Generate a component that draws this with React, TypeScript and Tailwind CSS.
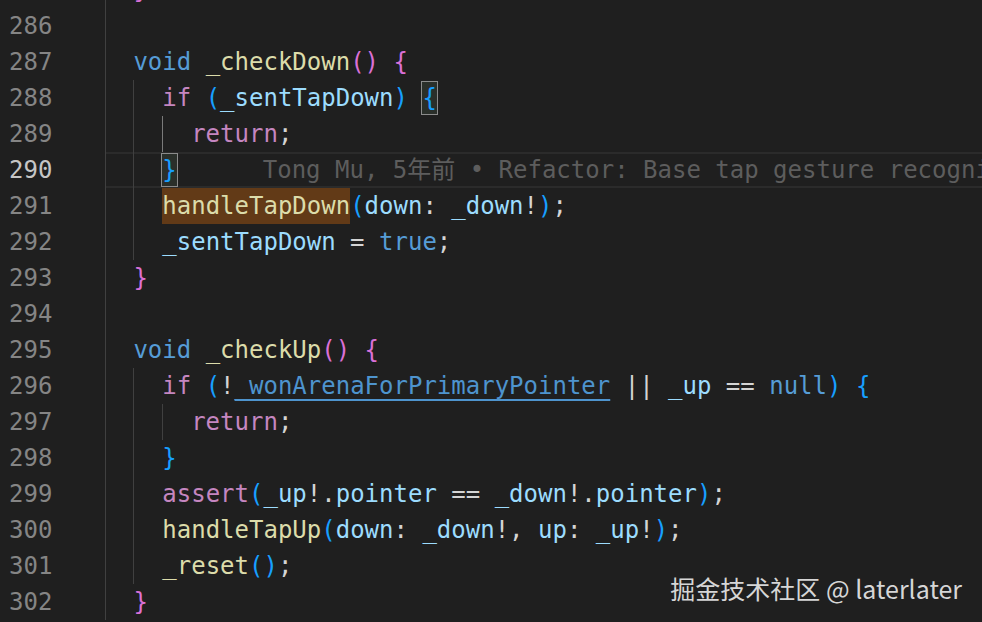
type Tok = [string, string];

const kw = "text-[#569cd6]";
const fn = "text-[#dcdcaa]";
const ctl = "text-[#c586c0]";
const vr = "text-[#9cdcfe]";
const br2 = "text-[#da70d6]";
const br3 = "text-[#179fff]";
const op = "text-[#d4d4d4]";

type Line = {
  n: number;
  guides: number; // indent guides to draw
  activeGuide?: boolean;
  toks: Tok[];
  current?: boolean;
};

const lines: Line[] = [
  { n: 285, guides: 1, toks: [["}", br2]] },
  { n: 286, guides: 1, toks: [] },
  { n: 287, guides: 1, toks: [["void", kw], [" ", op], ["_checkDown", fn], ["()", br2], [" ", op], ["{", br2]] },
  { n: 288, guides: 2, toks: [["if", ctl], [" ", op], ["(", br3], ["_sentTapDown", vr], [")", br3], [" ", op], ["{", "box " + br3]] },
  { n: 289, guides: 3, activeGuide: true, toks: [["return", ctl], [";", op]] },
  { n: 290, guides: 2, current: true, toks: [["}", "box " + br3]] },
  { n: 291, guides: 2, toks: [["handleTapDown", "hl " + fn], ["(", br3], ["down", vr], [": ", op], ["_down", vr], ["!", op], [")", br3], [";", op]] },
  { n: 292, guides: 2, toks: [["_sentTapDown", vr], [" = ", op], ["true", kw], [";", op]] },
  { n: 293, guides: 1, toks: [["}", br2]] },
  { n: 294, guides: 1, toks: [] },
  { n: 295, guides: 1, toks: [["void", kw], [" ", op], ["_checkUp", fn], ["()", br2], [" ", op], ["{", br2]] },
  { n: 296, guides: 2, toks: [["if", ctl], [" ", op], ["(", br3], ["!", op], ["_wonArenaForPrimaryPointer", "link"], [" || ", op], ["_up", vr], [" == ", op], ["null", kw], [")", br3], [" ", op], ["{", br3]] },
  { n: 297, guides: 3, toks: [["return", ctl], [";", op]] },
  { n: 298, guides: 2, toks: [["}", br3]] },
  { n: 299, guides: 2, toks: [["assert", ctl], ["(", br3], ["_up", vr], ["!.", op], ["pointer", vr], [" == ", op], ["_down", vr], ["!.", op], ["pointer", vr], [")", br3], [";", op]] },
  { n: 300, guides: 2, toks: [["handleTapUp", fn], ["(", br3], ["down", vr], [": ", op], ["_down", vr], ["!, ", op], ["up", vr], [": ", op], ["_up", vr], ["!", op], [")", br3], [";", op]] },
  { n: 301, guides: 2, toks: [["_reset", fn], ["()", br3], [";", op]] },
  { n: 302, guides: 1, toks: [["}", br2]] },
];

function Token({ t }: { t: Tok }) {
  const [text, cls] = t;
  if (cls.startsWith("box ")) {
    return (
      <span className={`inline-block h-[34px] leading-[32px] border border-[#8b8b8b] bg-[#2a2f2a] -mx-px ${cls.slice(4)}`}>
        {text}
      </span>
    );
  }
  if (cls.startsWith("hl ")) {
    return <span className={`inline-block h-[36px] bg-[#623a17] ${cls.slice(3)}`}>{text}</span>;
  }
  if (cls === "link") {
    return <span className="text-[#4e94ce] underline underline-offset-[5px] decoration-[2px]">{text}</span>;
  }
  return <span className={cls}>{text}</span>;
}

function CodeLine({ line }: { line: Line }) {
  const guides = [];
  for (let i = 0; i < line.guides; i++) {
    const active = line.activeGuide && i === line.guides - 1;
    guides.push(
      <span
        key={i}
        className={`inline-block w-[2ch] h-[36px] shrink-0 border-l ${active ? "border-[#7a7a7a]" : "border-[#404040]"}`}
      />
    );
  }
  return (
    <div className="flex h-[36px] items-stretch">
      <div
        className={`w-[104.5px] shrink-0 pl-[9px] leading-[36px] ${line.current ? "text-[#c6c6c6]" : "text-[#858585]"}`}
      >
        {line.n}
      </div>
      <div
        className={`flex flex-1 items-center whitespace-pre leading-[36px] ${
          line.current ? "border-y-2 border-[#2b2b2b]" : ""
        }`}
      >
        <div className="flex">{guides}</div>
        {line.toks.map((t, i) => (
          <Token key={i} t={t} />
        ))}
        {line.current && (
          <span className="ml-[86px] text-[#5d5d5d]">Tong Mu, 5年前 • Refactor: Base tap gesture recognizer</span>
        )}
      </div>
    </div>
  );
}

export default function App() {
  return (
    <div className="relative w-[982px] h-[622px] overflow-hidden bg-[#1f1f1f] text-[24px] font-['DejaVu_Sans_Mono','Noto_Sans_CJK_SC',monospace]">
      <div className="-mt-[28px]">
        {lines.map((l) => (
          <CodeLine key={l.n} line={l} />
        ))}
      </div>
      {/* watermark */}
      <div className="absolute right-[20px] bottom-[18px] text-[25px] leading-[32px] text-[#d6d6d6] font-['Noto_Sans_CJK_SC',sans-serif]">
        掘金技术社区 @ laterlater
      </div>
    </div>
  );
}
